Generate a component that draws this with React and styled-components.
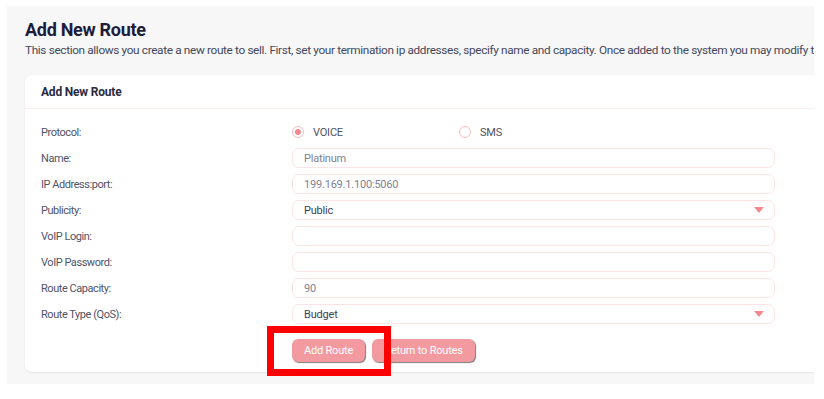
import React from 'react';
import styled, { createGlobalStyle } from 'styled-components';

const GlobalStyle = createGlobalStyle`
  body {
    margin: 0;
    background: #ffffff;
    font-family: Roboto, "Liberation Sans", Arial, sans-serif;
  }
`;

const Page = styled.div`
  padding: 6px 10px 15px 7px;
  width: 824px;
  box-sizing: border-box;
`;

const Panel = styled.section`
  background: #f7f7f7;
  padding: 12px 0 12px 18px;
  overflow: hidden;
`;

const Title = styled.h1`
  margin: 0;
  font-size: 18px;
  line-height: 24px;
  font-weight: 700;
  letter-spacing: -0.3px;
  color: #1d1d3b;
`;

const Intro = styled.p`
  margin: 0;
  font-size: 11.8px;
  line-height: 16px;
  letter-spacing: -0.35px;
  color: #44475a;
  white-space: nowrap;
`;

const Card = styled.div`
  margin-top: 17px;
  width: 830px;
  background: #fff;
  border-radius: 7px;
  box-shadow: 0 1px 2px rgba(0, 0, 0, 0.08);
`;

const CardHeader = styled.div`
  height: 33px;
  padding-left: 16px;
  display: flex;
  align-items: center;
  border-bottom: 1px solid #fcecec;
  font-size: 12px;
  font-weight: 700;
  letter-spacing: -0.2px;
  color: #2b2b3f;
`;

const CardBody = styled.div`
  padding: 13px 0 10px 16px;
`;

const Form = styled.div`
  display: grid;
  grid-template-columns: 251px 483px;
  row-gap: 6px;
`;

const Label = styled.div`
  height: 20px;
  display: flex;
  align-items: center;
  font-size: 11px;
  letter-spacing: -0.45px;
  color: #505266;
`;

const Radios = styled.div`
  height: 20px;
  display: flex;
  align-items: center;
`;

const RadioOption = styled.label`
  width: 167px;
  display: flex;
  align-items: center;
  gap: 9px;
  font-size: 11px;
  letter-spacing: -0.2px;
  color: #505266;
`;

const RadioDot = styled.span`
  width: 12px;
  height: 12px;
  box-sizing: border-box;
  border-radius: 50%;
  border: 1px solid #f7bcbc;
  display: flex;
  align-items: center;
  justify-content: center;

  &::after {
    content: '';
    width: 6px;
    height: 6px;
    border-radius: 50%;
    background: ${(p) => (p.$checked ? '#f08a8f' : 'transparent')};
  }
`;

const Field = styled.div`
  position: relative;
  height: 20px;
  box-sizing: border-box;
  border: 1px solid #fde4e4;
  border-radius: 7px;
  padding-left: 11px;
  display: flex;
  align-items: center;
  font-size: 11px;
  letter-spacing: -0.2px;
  color: ${(p) => (p.$dark ? '#3f4152' : '#808294')};
  background: #fff;
`;

const Caret = styled.span`
  position: absolute;
  right: 10px;
  top: 6px;
  width: 0;
  height: 0;
  border-left: 5px solid transparent;
  border-right: 5px solid transparent;
  border-top: 6px solid #f08a8f;
`;

const Actions = styled.div`
  margin: 15px 0 0 251px;
  display: flex;
  gap: 7px;
`;

const ButtonSlot = styled.div`
  position: relative;
`;

const Button = styled.button`
  width: ${(p) => p.$w}px;
  height: 23px;
  padding: 0;
  border: none;
  border-radius: 6px;
  background: #f29a9f;
  color: #fff;
  font-family: inherit;
  font-size: 11px;
  letter-spacing: -0.2px;
  box-shadow: 1px 1px 1px #7d7d7d;
`;

const Highlight = styled.div`
  position: absolute;
  left: -25px;
  top: -13px;
  width: 124px;
  height: 50px;
  box-sizing: border-box;
  border: 7px solid #ff0000;
  z-index: 2;
  pointer-events: none;
`;

const rows = [
  { label: 'Name:', value: 'Platinum' },
  { label: 'IP Address:port:', value: '199.169.1.100:5060' },
  { label: 'Publicity:', value: 'Public', dark: true, select: true },
  { label: 'VoIP Login:', value: '' },
  { label: 'VoIP Password:', value: '' },
  { label: 'Route Capacity:', value: '90' },
  { label: 'Route Type (QoS):', value: 'Budget', dark: true, select: true },
];

export default function App() {
  return (
    <Page>
      <GlobalStyle />
      <Panel>
        <Title>Add New Route</Title>
        <Intro>
          This section allows you create a new route to sell. First, set your termination ip addresses, specify name and capacity. Once added to the system you may modify the route settings at any time.
        </Intro>
        <Card>
          <CardHeader>Add New Route</CardHeader>
          <CardBody>
            <Form>
              <Label>Protocol:</Label>
              <Radios>
                <RadioOption>
                  <RadioDot $checked />
                  VOICE
                </RadioOption>
                <RadioOption>
                  <RadioDot />
                  SMS
                </RadioOption>
              </Radios>
              {rows.map((r) => (
                <React.Fragment key={r.label}>
                  <Label>{r.label}</Label>
                  <Field $dark={r.dark}>
                    {r.value}
                    {r.select && <Caret />}
                  </Field>
                </React.Fragment>
              ))}
            </Form>
            <Actions>
              <ButtonSlot>
                <Button $w={73}>Add Route</Button>
                <Highlight />
              </ButtonSlot>
              <ButtonSlot>
                <Button $w={103}>Return to Routes</Button>
              </ButtonSlot>
            </Actions>
          </CardBody>
        </Card>
      </Panel>
    </Page>
  );
}
